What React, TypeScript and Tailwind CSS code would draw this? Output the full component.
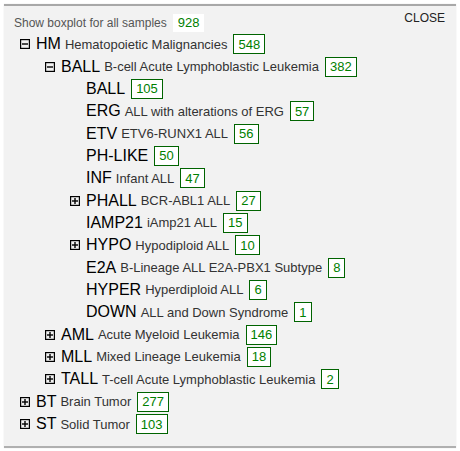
import { ReactNode } from 'react'

type Node = {
  code: string
  label?: string
  count?: number
  level: number
  toggle?: 'open' | 'closed'
}

const rows: Node[] = [
  { code: 'HM', label: 'Hematopoietic Malignancies', count: 548, level: 0, toggle: 'open' },
  { code: 'BALL', label: 'B-cell Acute Lymphoblastic Leukemia', count: 382, level: 1, toggle: 'open' },
  { code: 'BALL', count: 105, level: 2 },
  { code: 'ERG', label: 'ALL with alterations of ERG', count: 57, level: 2 },
  { code: 'ETV', label: 'ETV6-RUNX1 ALL', count: 56, level: 2 },
  { code: 'PH-LIKE', count: 50, level: 2 },
  { code: 'INF', label: 'Infant ALL', count: 47, level: 2 },
  { code: 'PHALL', label: 'BCR-ABL1 ALL', count: 27, level: 2, toggle: 'closed' },
  { code: 'IAMP21', label: 'iAmp21 ALL', count: 15, level: 2 },
  { code: 'HYPO', label: 'Hypodiploid ALL', count: 10, level: 2, toggle: 'closed' },
  { code: 'E2A', label: 'B-Lineage ALL E2A-PBX1 Subtype', count: 8, level: 2 },
  { code: 'HYPER', label: 'Hyperdiploid ALL', count: 6, level: 2 },
  { code: 'DOWN', label: 'ALL and Down Syndrome', count: 1, level: 2 },
  { code: 'AML', label: 'Acute Myeloid Leukemia', count: 146, level: 1, toggle: 'closed' },
  { code: 'MLL', label: 'Mixed Lineage Leukemia', count: 18, level: 1, toggle: 'closed' },
  { code: 'TALL', label: 'T-cell Acute Lymphoblastic Leukemia', count: 2, level: 1, toggle: 'closed' },
  { code: 'BT', label: 'Brain Tumor', count: 277, level: 0, toggle: 'closed' },
  { code: 'ST', label: 'Solid Tumor', count: 103, level: 0, toggle: 'closed' },
]

const indent = ['pl-[12px]', 'pl-[37px]', 'pl-[62px]']

function ToggleIcon({ open }: { open: boolean }) {
  return (
    <svg width="10" height="10" viewBox="0 0 10 10" className="shrink-0">
      <rect x="0.6" y="0.6" width="8.8" height="8.8" fill="none" stroke="#000" strokeWidth="1.2" />
      <line x1="2" y1="5" x2="8" y2="5" stroke="#000" strokeWidth="1.4" />
      {!open && <line x1="5" y1="2" x2="5" y2="8" stroke="#000" strokeWidth="1.4" />}
    </svg>
  )
}

function Count({ children }: { children: ReactNode }) {
  return (
    <span className="ml-[6px] inline-flex h-[20px] items-center border border-[#006400] bg-white px-[4px] text-[13px] leading-none text-[#008000]">
      {children}
    </span>
  )
}

export default function App() {
  return (
    <div className="h-[451px] w-[460px] bg-white p-[4px] font-['Liberation_Sans',Arial,sans-serif]">
      <div className="h-[444px] w-[452px] border-y-2 border-t-[#a8a8a8] border-b-[#b0b0b0] bg-[#f2f2f2] pl-[4px] shadow-[0_0_1px_rgba(0,0,0,0.15)]">
        {/* Header */}
        <div className="flex h-[27px] items-start justify-between pr-[11px]">
          <div className="mt-[8px] flex h-[18px] items-center pl-[6px]">
            <span className="text-[12px] text-[#555]">Show boxplot for all samples</span>
            <span className="ml-[6px] flex h-[18px] items-center bg-white px-[5px] text-[13px] text-[#008000]">928</span>
          </div>
          <button className="mt-[3px] text-[12px] text-[#222]">CLOSE</button>
        </div>

        {/* Tree */}
        <div>
          {rows.map((row, i) => (
            <div key={i} className={`flex h-[22.35px] items-center ${indent[row.level]}`}>
              {row.toggle ? (
                <ToggleIcon open={row.toggle === 'open'} />
              ) : (
                <span className="w-[10px] shrink-0" />
              )}
              <span className="ml-[6px] text-[16px] leading-none text-black">{row.code}</span>
              {row.label && (
                <span className="ml-[4px] text-[13px] leading-none text-[#333]">{row.label}</span>
              )}
              {row.count !== undefined && <Count>{row.count}</Count>}
            </div>
          ))}
        </div>
      </div>
    </div>
  )
}
